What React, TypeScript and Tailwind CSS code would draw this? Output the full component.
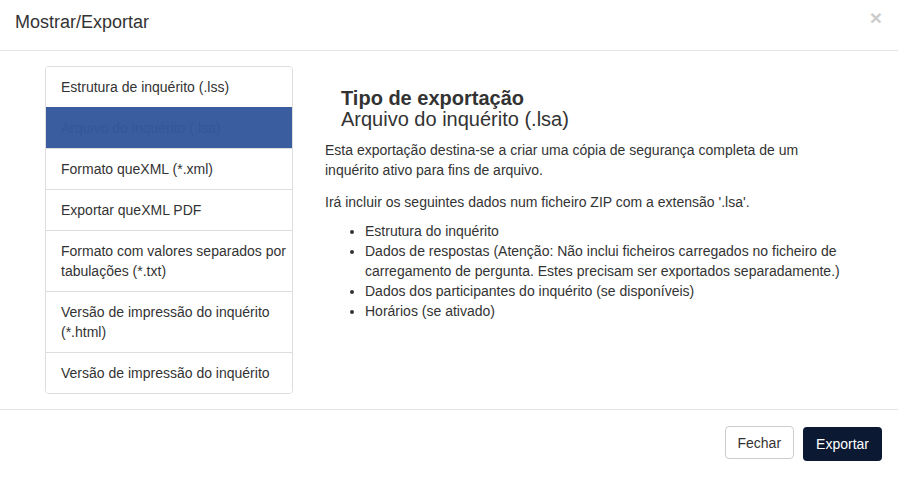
import { FC } from 'react';

const items = [
  'Estrutura de inquérito (.lss)',
  'Arquivo do inquérito (.lsa)',
  'Formato queXML (*.xml)',
  'Exportar queXML PDF',
  'Formato com valores separados por tabulações (*.txt)',
  'Versão de impressão do inquérito (*.html)',
  'Versão de impressão do inquérito',
];

const App: FC = () => {
  return (
    <div className="w-[898px] h-[477px] bg-white text-[#333] text-[14px] leading-[20px] font-['Liberation_Sans',Arial,sans-serif]">
      {/* header */}
      <div className="h-[51px] flex items-start justify-between border-b border-[#e5e5e5] px-[15px] pt-[10px]">
        <h4 className="text-[18px] leading-[24px] text-[#333]">Mostrar/Exportar</h4>
        <button className="text-[21px] font-bold leading-[21px] text-black opacity-20 mt-[-3px] mr-[1px]">×</button>
      </div>

      {/* body */}
      <div className="flex pl-[30px] pr-[15px] py-[15px] h-[358px]">
        <div className="w-[278px] px-[15px] shrink-0">
          <div className="w-[248px] border border-[#ddd] rounded-[4px] overflow-hidden">
            {items.map((t, i) => (
              <div
                key={t}
                className={
                  i === 1
                    ? 'pl-[15px] pr-[3px] py-[10px] bg-[#3a5da0] text-[#33579a] border-t border-[#3a5da0]'
                    : 'pl-[15px] pr-[3px] py-[10px] bg-white border-t border-[#ddd] first:border-t-0'
                }
              >
                {t}
              </div>
            ))}
          </div>
        </div>
        <div className="w-[545px] shrink-0 pl-[17px] pt-[1px]">
          <div className="pl-[16px] pt-[21px] mb-[10px]">
            <div className="text-[20px] leading-[21px] font-bold">Tipo de exportação</div>
            <div className="text-[20px] leading-[21px]">Arquivo do inquérito (.lsa)</div>
          </div>
          <p className="mb-[12px]">
            Esta exportação destina-se a criar uma cópia de segurança completa de um inquérito ativo para fins de
            arquivo.
          </p>
          <p className="mb-[9px]">Irá incluir os seguintes dados num ficheiro ZIP com a extensão '.lsa'.</p>
          <ul className="list-disc pl-[40px]">
            <li>Estrutura do inquérito</li>
            <li>
              Dados de respostas (Atenção: Não inclui ficheiros carregados no ficheiro de carregamento de pergunta.
              Estes precisam ser exportados separadamente.)
            </li>
            <li>Dados dos participantes do inquérito (se disponíveis)</li>
            <li>Horários (se ativado)</li>
          </ul>
        </div>
      </div>

      {/* footer */}
      <div className="border-t border-[#e5e5e5] flex justify-end gap-[9px] px-[16px] pt-[16px]">
        <button className="h-[33px] px-[12px] border border-[#ccc] rounded-[4px] bg-white text-[#333]">Fechar</button>
        <button className="h-[34px] px-[13px] mt-[1px] rounded-[4px] bg-[#0b1933] text-white">Exportar</button>
      </div>
    </div>
  );
};

export default App;
